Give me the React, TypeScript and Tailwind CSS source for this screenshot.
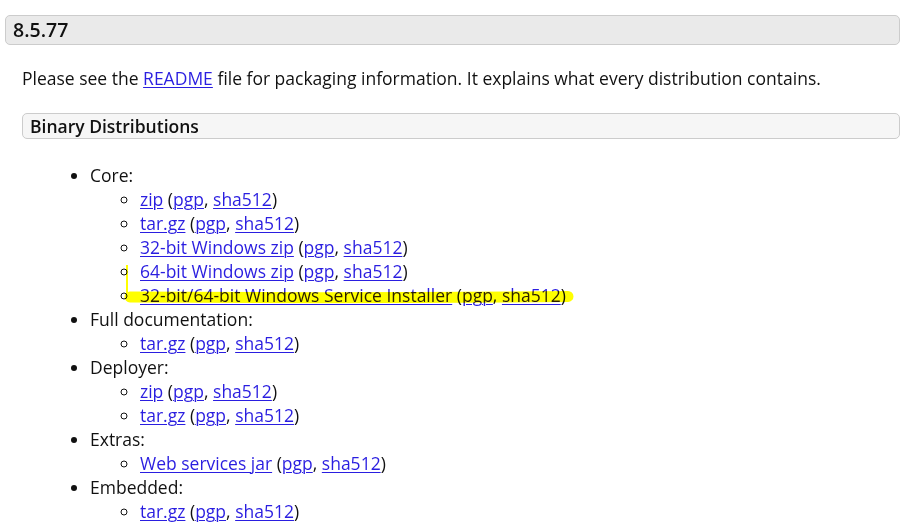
import React from "react";

const A: React.FC<{ children: React.ReactNode }> = ({ children }) => (
  <a href="#" className="text-[#2a1ee0] underline underline-offset-2 decoration-1">
    {children}
  </a>
);

const Item: React.FC<{ label: string }> = ({ label }) => (
  <li>
    <A>{label}</A> (<A>pgp</A>, <A>sha512</A>)
  </li>
);

const groups: { title: string; items: string[] }[] = [
  { title: "Core:", items: ["zip", "tar.gz", "32-bit Windows zip", "64-bit Windows zip", "32-bit/64-bit Windows Service Installer"] },
  { title: "Full documentation:", items: ["tar.gz"] },
  { title: "Deployer:", items: ["zip", "tar.gz"] },
  { title: "Extras:", items: ["Web services jar"] },
  { title: "Embedded:", items: ["tar.gz"] },
];

export default function App() {
  return (
    <div className="relative w-[914px] h-[524px] overflow-hidden bg-white text-[#111] font-['Open_Sans',sans-serif] text-[17.5px] leading-[24px]">
      <div className="pt-[15px] pl-[5px] pr-[14px]">
        <h2 className="h-[30px] flex items-center px-[7px] bg-[#eaeaea] border border-[#cccccc] rounded-[5px] text-[19.5px] font-semibold text-[#111]">
          8.5.77
        </h2>
        <div className="pl-[17px]">
          <p className="mt-[21px]">
            Please see the <A>README</A> file for packaging information. It explains what every distribution contains.
          </p>
          <h3 className="mt-[23px] h-[26px] flex items-center px-[7px] bg-[#f6f6f6] border border-[#cccccc] rounded-[5px] text-[17.5px] font-semibold text-[#111]">
            Binary Distributions
          </h3>
          <ul className="mt-[24px] pl-[68px] list-disc">
            {groups.map((g) => (
              <li key={g.title}>
                {g.title}
                <ul className="pl-[50px] list-[circle]">
                  {g.items.map((it) => (
                    <Item key={it} label={it} />
                  ))}
                </ul>
              </li>
            ))}
          </ul>
        </div>
      </div>
      {/* yellow marker scribble */}
      <svg className="absolute left-0 top-0 pointer-events-none mix-blend-multiply" width="914" height="524">
        <path d="M127 265 L127 296" stroke="#ffff00" strokeWidth="2" fill="none" />
        <path d="M130 297 Q350 298.5 568 296.5" stroke="#ffff00" strokeWidth="11" strokeLinecap="round" fill="none" />
      </svg>
    </div>
  );
}
